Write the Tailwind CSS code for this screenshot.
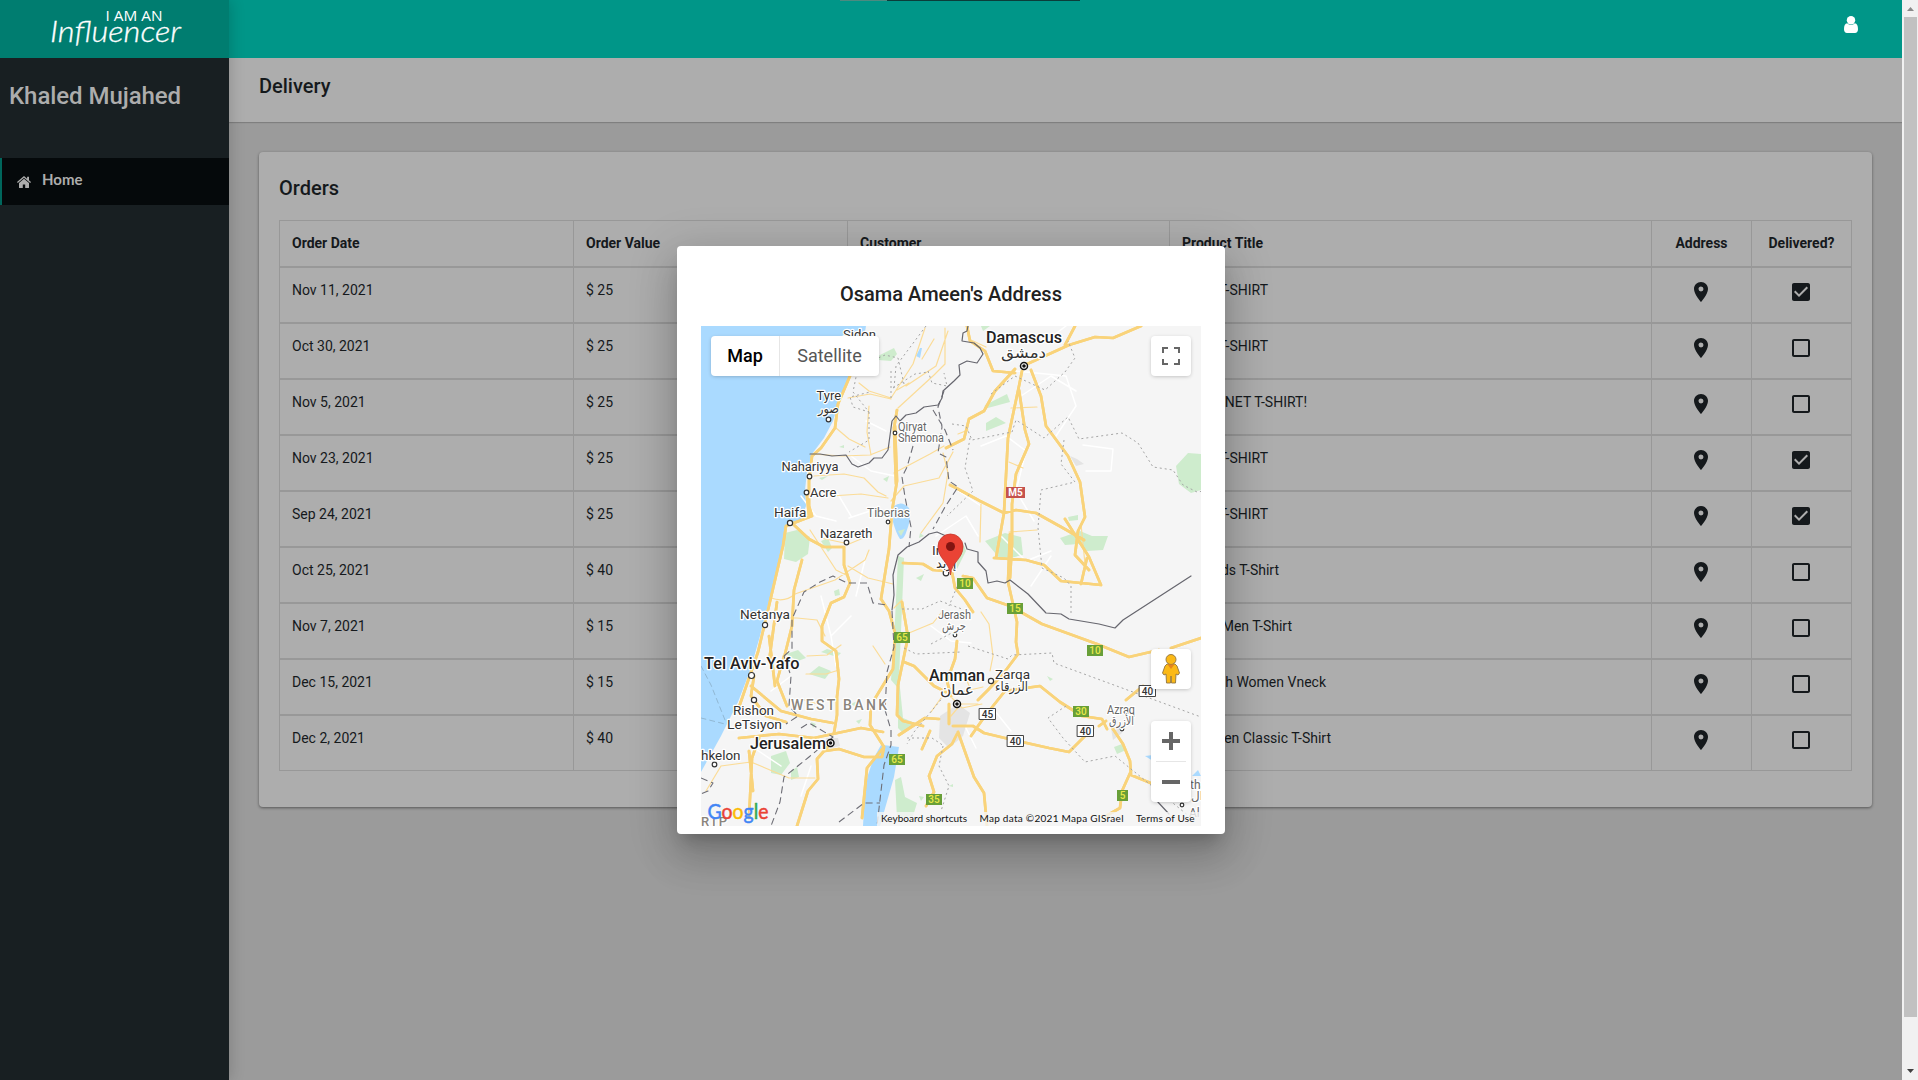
<!DOCTYPE html>
<html lang="en">
<head>
<meta charset="utf-8">
<title>Delivery</title>
<script src="https://cdn.jsdelivr.net/npm/@tailwindcss/browser@4"></script>
</head>
<body class="relative flex h-[1080px] w-[1918px] overflow-hidden bg-[#9b9b9b] font-[Roboto,sans-serif] text-[#15191c]">

<svg class="hidden">
  <symbol id="pin" viewBox="0 0 24 24"><path d="M12 2C8.13 2 5 5.13 5 9c0 5.25 7 13 7 13s7-7.75 7-13c0-3.87-3.13-7-7-7zm0 9.5a2.5 2.5 0 0 1 0-5 2.5 2.5 0 0 1 0 5z"/></symbol>
  <symbol id="on" viewBox="0 0 24 24"><path d="M19 3H5c-1.11 0-2 .9-2 2v14c0 1.1.89 2 2 2h14c1.11 0 2-.9 2-2V5c0-1.1-.89-2-2-2zm-9 14l-5-5 1.41-1.41L10 14.17l7.59-7.59L19 8l-9 9z"/></symbol>
  <symbol id="off" viewBox="0 0 24 24"><path d="M19 5v14H5V5h14m0-2H5c-1.1 0-2 .9-2 2v14c0 1.1.9 2 2 2h14c1.1 0 2-.9 2-2V5c0-1.1-.9-2-2-2z"/></symbol>
</svg>

<!-- Sidebar -->
<aside class="z-10 flex w-[229px] flex-none flex-col bg-[#181f22] shadow-[1px_0_14px_rgba(0,0,0,.18)]">
  <div class="h-[58px] bg-[#007d70]">
    <svg class="block" width="229" height="58" fill="#fff">
      <text x="105.500" y="20.500" font-family="Open Sans" font-size="15" textLength="57" lengthAdjust="spacingAndGlyphs">I AM AN</text>
      <text x="50" y="42" font-family="Lato" font-style="italic" font-weight="300" stroke="#fff" stroke-width=".3" font-size="29" textLength="131" lengthAdjust="spacingAndGlyphs">Influencer</text>
    </svg>
  </div>
  <div class="flex h-[100px] items-start pl-[9px] pt-[22px] text-[24px] font-medium leading-8 tracking-[-0.06px] text-[#adadad]">Khaled Mujahed</div>
  <a class="flex h-[47px] items-center border-l-2 border-[#00665c] bg-[#05090b] pl-[15px] font-[Lato,sans-serif] text-[15px] font-bold text-[#adadad]">
    <svg width="14" height="12" viewBox="0 0 14 12" fill="currentColor"><path d="M7 0 0 6l.8.9L7 1.700l6.200 5.200.8-.9-2-1.700V.8h-1.900v1.900z"/><path d="M7 2.800 2 7v4.400c0 .3.200.6.600.6h3.200V8.500h2.400V12h3.200c.4 0 .6-.3.6-.6V7z"/></svg>
    <span class="-mt-[5px] ml-[11px]">Home</span>
  </a>
</aside>

<div class="flex flex-1 flex-col">
  <!-- Top bar -->
  <header class="flex h-[58px] flex-none justify-end bg-[#009688] pr-[44px] pt-4">
    <svg width="14" height="17" viewBox="0 0 14 17" fill="#fff"><circle cx="7" cy="4.200" r="4.200"/><path d="M3.200 7.200C1 7.500 0 9.600 0 13.200 0 15.600 1.200 17 3 17h8c1.800 0 3-1.400 3-3.800 0-3.600-1-5.700-3.200-6A5 5 0 0 1 7 8.900a5 5 0 0 1-3.800-1.700z"/></svg>
  </header>
  <div class="flex h-16 flex-none bg-[#adadad] pl-[30px] pt-4 text-xl font-medium leading-6 shadow-[0_1px_1px_rgba(0,0,0,.18)]"><h1>Delivery</h1></div>
  <main class="flex-1 pl-[30px] pr-[30px] pt-[30px]">
    <section class="flex h-[655px] flex-col rounded bg-[#adadad] px-5 pt-6 shadow-[0_1px_3px_rgba(0,0,0,.45)]">
      <h2 class="text-xl font-medium leading-6">Orders</h2>
      <div class="mt-5 w-[1573px] border-r border-t border-[#989898] text-sm leading-5" id="orders">
        <div class="grid h-[47px] grid-cols-[294px_274px_322px_482px_100px_100px] border-b-2 border-[#989898] font-bold">
          <div class="border-l border-[#989898] pl-3 pt-3">Order Date</div>
          <div class="border-l border-[#989898] pl-3 pt-3">Order Value</div>
          <div class="border-l border-[#989898] pl-3 pt-3">Customer</div>
          <div class="border-l border-[#989898] pl-3 pt-3">Product Title</div>
          <div class="border-l border-[#989898] pt-3 text-center">Address</div>
          <div class="border-l border-[#989898] pt-3 text-center">Delivered?</div>
        </div>
      </div>
    </section>
  </main>
</div>

<!-- Scrollbar -->
<div class="flex w-4 flex-none flex-col items-center bg-[#f1f1f1]">
  <div class="flex h-[17px] items-center justify-center pt-px"><svg width="7" height="4" viewBox="0 0 7 4" fill="#8a8a8a"><path d="M0 4 3.500 0 7 4z"/></svg></div>
  <div class="ml-px h-[1000px] w-[13px] bg-[#c1c1c1]"></div>
  <div class="flex flex-1 items-end pb-[7px]"><svg width="7" height="4" viewBox="0 0 7 4" fill="#404040"><path d="M0 0 3.500 4 7 0z"/></svg></div>
</div>

<!-- Window edge above the page -->
<div class="absolute left-[840px] top-0 z-20 flex h-px w-[240px]"><div class="w-[47px] bg-[#4d8a80]"></div><div class="flex-1 bg-[#0b3d3a]"></div></div>

<!-- Address dialog -->
<div class="absolute left-[677px] top-[246px] z-30 flex h-[588px] w-[548px] flex-col rounded bg-white px-6 pt-9 shadow-[0_11px_15px_-7px_rgba(0,0,0,.2),0_24px_38px_3px_rgba(0,0,0,.14),0_9px_46px_8px_rgba(0,0,0,.12)]">
  <h3 class="h-11 text-center text-xl font-medium leading-6 text-[#212121]">Osama Ameen's Address</h3>
  <div class="relative h-[500px] w-[500px] overflow-hidden bg-[#f5f5f5]">
    <svg class="block" width="500" height="500" viewBox="0 0 500 500" fill="none" stroke-linejoin="round" stroke-linecap="round">
      <!-- Sea and coast -->
      <path fill="#aadaff" d="M0 0H165L160 30 149 50 139 72 132 95 123 112 111 128 106 146 104 164 105 180 99 196 86 198 83 213 78 240 68 275 59 310 49 345 37 376 20 410 0 446z"/>
      <path fill="#aadaff" d="M193 180q8-6 15 2 3 9-2 22-3 10-7 9-4-6-7-17z M182 419l16 2-5 30-14 49h-17l2-37q4-25 16-44z M215 30l4-8 2 0-2 10z M444 430l8-1 0 6z M491 450l6-6 3 6z"/>
      <!-- Woodland -->
      <g fill="#ceeccd">
        <path d="M84 207l12-3 13 7-2 17-12 8-12-3z M475 140l12-13 13 1v36l-10 3-12-9z M177 30l16-8 3 6-6 7-13-1z M141 43l14-2-8 6z M284 79l22-11 3 8-26 7z M285 97l10-6 10 6-20 8z M280 0l9 0-7 5z M284 215l20-8 16 4 2 18-22 5z M359 212l20-7 12 5 16 0-5 14-16 1-8-7-14 1z M367 191l10-2v5l-9 1z M197 230l6 2-2 50-3 70 4 40 12 5-12 10-5-5v-40l-7-8 4-60z M70 430l15-5 4 12-9 12-10-2z M90 445l6-4 2 10-8 3z M194 454l6-3 4 20 12 6-4 13-16 2z M108 348l10-8 12 5-6 8z M85 328l12-4 8 8-8 3z M120 326l6-3 14 4-4 4z M120 215l7-3 4 10-4 4z M133 265l5-2 1 6-5 1z M215 252l8-4-3 7z M252 225l10-8 3 8-9 18z M413 421l8-3 4 6-9 4z M150 378l6-3-1 6z M182 153l6-3-2 6z M118 152l9-2-6 4z"/>
        <path d="M138 121l5-2v3z M346 350l6 3-3 2z M248 460l4-2v3z M110 396l5 2-3 4z M155 395l6-2-3 5z M218 470l5 1-3 4z M197 205l7-2-4 7z M219 207l4 3-5 2z"/>
      </g>
      <g fill="#e4e4e4"><path d="M239 390l18-12 12 9-7 23-14 12-10-10z M369 130l7 3 7 5-8 2z M410 402l9-3 2 8-9 7z M125 412l12 0 2 8-12 3z"/></g>
      <!-- Local streets -->
      <g stroke="#fff" stroke-width="1.500">
        <path d="M150 130l20 15 24 5M165 95l20 10M280 120l25-10 20 15-10 40 18 30M320 70l30-20 25 15M375 80l-20 30M385 145h25l2-22-30-4M250 160l30 20M150 290l-20 20 5 30M165 230l-10 40M120 270l10 40M300 210l25 25 25-10M330 260l20-30M345 15l20-15M315 45l50 5 10 30M235 210l30-20 12 20M230 300l20 15 20 2M90 350l-20 15M100 170l15 20 20 5M135 165l15 25M148 192l30-10M50 420l30 20M110 440l-10 30M265 402l10 20M290 380l20 25"/>
      </g>
      <!-- Secondary roads -->
      <g stroke="#fbdc97" stroke-width="1.200">
        <path d="M147 72l22-4 21 5M135 102l13 11 16 8M168 80l-2 26 4 23M190 72l-22-7-10-8M190 72l22-34 12-36M205 60l30-20 12-35M197 82l36-33 11-11v-36M208 57l-12 7M233 13l-12 20M111 128l30 2 28-1 20-8M113 150l30-2 20 4 14 14 8 4M130 170l30-2 27 4M120 212l28 6 12-5M109 204l26 40 12 6M68 292l28 0 20 2 8 16M106 330l20-1 14-10M105 348l20 0 13-4M70 272q14 5 24-4l40-14 30-20 4-10M147 240l20 12 25 6M172 320l12 18M193 282l8-8M193 147l36-19 14-8M190 175l13-15 35-8 14-26M242 127l5 20-5 30-22 30"/>
        <path d="M208 307l24-10 8-10M280 178l-1 38M308 136l14 6M20 440l30-4 38 16 26 0M20 440l-15 25M230 386l10-14 20-6 22-5M250 390l10-12 17 0M251 372l10 10 20-4M289 345l3-15-4-32-8-12M262 346l8 18M257 108l10-4M310 82l26-1M100 373l20 6M270 14l15 7M308 206l28-2M380 198l4 40"/>
      </g>
      <g stroke="#f9d37a" stroke-width="2.700" id="main">
        <path d="M149 50l-12 28-3 24-14 20-9 8-3 25v25l3 10-26 10-3 20-15 64-10 42-20 58"/>
        <path d="M108 190l-2-20M93 199l15 14 15 8h20l0 18 6 18-6 14-13 6-9 23 0 15 14 10 3 28-2 18 0 18-3 18M101 234l-8 30-2 36-7 28M76 276l-8 60M68 310l6 50M83 330l-7 25 10 25M50 360l30 25 30 8 22 4M38 412l40-4 35 4 47-10 22 4M53 350l-3 20 15 20 20 6M58 412l-7 20-3 60M48 425l4 40"/>
        <path d="M194 100l2 55-5 30-3 38-8 50M196 84l-3 18 2 56M180 273l8 12 6 22-2 36-22 36-1 20 14 22-2 10-18 0-25-8-14 2M130 417l-14 16 1 20-10 12-11 35M182 422l-16 20-5 50"/>
        <path d="M202 237l20 1 10 6 12 1M201 276l6 35-10 48-1 30 6 6 20 5M203 336l10 4 20 20 12 6M198 409l26-17 14 1M251 246l3 16 10 12 8 12M262 250l10 2 14 20 23 8 32 18 55 20 32 13 30-7M470 322l30-10M309 208l-2 48 9 40-1 20 2 12-15 20-15 16-10 10M256 315l-2 18-8 22 4 15"/>
        <path d="M248 378v20M256 408l-5 10-15 12-8 20 5 16-8 14M257 406l16 45 10 16 3 33M252 400l20 0 11 7 25 6 40 9 20 4 14-14 10-10M270 410l14-20 20-25 35-5 20 16 22 14 20 3 5 10M425 374l17-14M398 400l7-5M410 400l12 18 7 17 1 14 22 9M430 445l-9 20-2 17-14 8M229 405l-8 18"/>
        <path d="M321 45l-3 15-11 52-4 75-8 45M318 64l6 40 4 14-13 30-4 30 0 40-2 34M330 44l10 26 5 30 22 30 12 26 5 35-7 14-3 24 14 15M266 0l3 15 15 10 8 20 22 2M314 43l-20 22-11 20-15 8-5 20-18 9M249 159l8 4 22 12 24 12 12-3 20 3 27 15 21 12M293 232l32 2 18 5 17 16 40 4-12-28-24-38M386 232l-6 26M324 39l44-20 26-8 18 1 28-12M364 19l10-19"/>
      </g>
      <g><use href="#main" class="[stroke-width:1px]"/></g>
      <!-- Administrative boundaries -->
      <g stroke="#a5a5a5" stroke-width="1" stroke-dasharray="2 3" stroke-linecap="butt">
        <path d="M225 0l-30 40-2 22M203 58l-6-26-13-3-27 12-5 25 16 20-16-5-3-10 20-5M190 45v30M227 45l4 12 15 3-3-13M168 86v28l-20 12M192 62l22-14 13-2M290 68l24-18 30 14 20-18 10-14-7-17M251 98l14 2 6 14 40-8 4-12 28 18 24-21 11 22 43-6 16 10 15 24 20 3 10 15 14 7 14-2M363 114l-3 24 14 18-34 8-3 38 4 40 22 10 7 8 0 30M269 112l-5 30 8 23-26 25M201 283l20 0 18-8 22 8M203 322l12 6 45-2M230 318l30-16M267 320l40 13 4-4 40-2 2 10 147 54M365 380l-18 12 15 20 22 24 30-6 80 65M258 256l-10 24M243 370l-30 36-7 12M206 412l25 0 12 8M242 420l-4 20 10 20-8 25"/>
      </g>
      <g stroke="#91b8d4" stroke-dasharray="5 4"><path d="M0 340l10 19 14 35M0 392l24 6"/></g>
      <g stroke="#6e6e76" stroke-width="1.100" stroke-dasharray="7 4" stroke-linecap="butt">
        <path d="M83 330l8-7v-30l12-27 16-10 13-6 14 7 20 0 6 20 14 2M83 330l7 20-2 30 9 10-12 8M100 402l8-5 24 14-24 20-25 20-4 25-9 24M191 285l2 36-7 25-2 38 6 20v15l-7 20-7 61M138 496l25-19 16 0M212 120l-6 21-5 10 3 20 6 30-2 20M243 65l-6 16 4 20-4 26 8 4 3 24 9 6-13 20-12 22M232 84l12 20 8 20M0 452l12 5-5 8-7 3"/>
      </g>
      <!-- International borders -->
      <g stroke="#66666e" stroke-width="1.200">
        <path d="M267 0l-1 5-4 2-1 8 12 2 6 5 3 6-6 9-10-2-8 4 1 10-6 6-11 10-1 7-4 7-14 2-8 6-10 2-6 6-4-5-4 5-4 29-6 8-8 0-5 5-11 4-6-3-6-9-14 1-12-2h-10"/>
        <path d="M191 284l2-15-1-20 5-20 9-8 12-5 10-8 8-2 9 4M264 217l2 6 11 3v10l8 9 2 12 9-2 8 2 5-3 18 14 18 19 15 1 8 5 30 5 16 4 8-8 68-44"/>
        <path d="M456 475l12 13"/>
      </g>
      <!-- Road shields -->
      <g fill="#689f38" font-family="Roboto" font-size="10" font-weight="500" text-anchor="middle">
        <path d="M256 252h16v11h-16z M306 277h16v11h-16z M386 319h16v11h-16z M372 380h16v11h-16z M416 464h11v11h-11z M193 306h16v11h-16z M188 428h16v11h-16z M225 468h16v11h-16z"/>
        <path fill="#c5524d" d="M305 161h19v11h-19z"/>
        <g fill="#e9e94a"><text x="264" y="261">10</text><text x="314" y="286">15</text><text x="394" y="328">10</text><text x="380" y="389">30</text><text x="421.500" y="473">5</text><text x="201" y="315">65</text><text x="196" y="437">65</text><text x="233" y="477">35</text></g>
        <text x="314.500" y="170" fill="#fff" font-weight="700">M5</text>
        <g fill="#fff" stroke="#444"><path d="M278.500 382.500h16v11h-16z M306.500 409.500h16v11h-16z M376.500 399.500h16v11h-16z M438.500 359.500h16v11h-16z"/></g>
        <g fill="#333"><text x="286.500" y="391.500">45</text><text x="314.500" y="418.500">40</text><text x="384.500" y="408.500">40</text><text x="446.500" y="368.500">40</text></g>
      </g>
      <!-- Town dots -->
      <g fill="#fff" stroke="#333" stroke-width="1.200">
        <circle cx="127.500" cy="93.500" r="2.300"/><circle cx="194" cy="107" r="1.800"/><circle cx="108.500" cy="150.500" r="2.300"/><circle cx="105.500" cy="166.500" r="2.300"/><circle cx="89" cy="197" r="2.600"/><circle cx="187" cy="196" r="1.800"/><circle cx="145.500" cy="216.500" r="2.300"/><circle cx="64" cy="299" r="2.600"/><circle cx="50.500" cy="349.500" r="3"/><circle cx="53" cy="374" r="2.600"/><circle cx="13.500" cy="438.500" r="2.300"/><circle cx="245" cy="247" r="2.800"/><circle cx="254" cy="309" r="1.800"/><circle cx="290" cy="355" r="2.600"/><circle cx="421" cy="403" r="1.800"/><circle cx="481" cy="479" r="1.800"/>
        <g stroke="#111" stroke-width="1.500"><circle cx="323" cy="40" r="3.500"/><circle cx="129.500" cy="417" r="3.500"/><circle cx="256" cy="378" r="3.500"/></g>
        <g fill="#111" stroke="none"><circle cx="323" cy="40" r="1.800"/><circle cx="129.500" cy="417" r="1.800"/><circle cx="256" cy="378" r="1.800"/></g>
      </g>
      <!-- Place names -->
      <g font-family="Roboto, DejaVu Sans, sans-serif" fill="#333" stroke="#fff" stroke-width="2.500" paint-order="stroke" font-size="13.500">
        <text x="142" y="12.500" textLength="33" lengthAdjust="spacingAndGlyphs">Sidon</text>
        <text x="115.500" y="74" textLength="24.500" lengthAdjust="spacingAndGlyphs">Tyre</text>
        <text x="117" y="87" font-size="13" textLength="21" lengthAdjust="spacingAndGlyphs">صور</text>
        <text x="80.500" y="144.500" textLength="57" lengthAdjust="spacingAndGlyphs">Nahariyya</text>
        <text x="109" y="170.500" textLength="26.500" lengthAdjust="spacingAndGlyphs">Acre</text>
        <text x="73" y="190.500" textLength="32.500" lengthAdjust="spacingAndGlyphs">Haifa</text>
        <text x="119" y="211.500" textLength="52.500" lengthAdjust="spacingAndGlyphs">Nazareth</text>
        <text x="39" y="292.500" textLength="50" lengthAdjust="spacingAndGlyphs">Netanya</text>
        <text x="32" y="388.500" textLength="41" lengthAdjust="spacingAndGlyphs">Rishon</text>
        <text x="26" y="402.500" textLength="55" lengthAdjust="spacingAndGlyphs">LeTsiyon</text>
        <text x="0" y="433.500" textLength="39.500" lengthAdjust="spacingAndGlyphs">hkelon</text>
        <text x="231" y="229">Irbid</text>
        <text x="235" y="242" font-size="13">إربد</text>
        <text x="294" y="352.500" textLength="35" lengthAdjust="spacingAndGlyphs">Zarqa</text>
        <text x="294" y="365" font-size="13" textLength="33" lengthAdjust="spacingAndGlyphs">الزرقاء</text>
        <g font-size="15.800" font-weight="500" fill="#222">
          <text x="285" y="16.500" textLength="76" lengthAdjust="spacingAndGlyphs">Damascus</text>
          <text x="3" y="342.500" textLength="95.500" lengthAdjust="spacingAndGlyphs">Tel Aviv-Yafo</text>
          <text x="49" y="422.500" textLength="76" lengthAdjust="spacingAndGlyphs">Jerusalem</text>
          <text x="228" y="354.500" textLength="56" lengthAdjust="spacingAndGlyphs">Amman</text>
        </g>
        <text x="300" y="32" font-size="15" textLength="45" lengthAdjust="spacingAndGlyphs">دمشق</text>
        <text x="239" y="369" font-size="15" textLength="34" lengthAdjust="spacingAndGlyphs">عمان</text>
        <g font-size="12" fill="#666">
          <text x="197" y="105" textLength="28.500" lengthAdjust="spacingAndGlyphs">Qiryat</text><text x="197" y="116" textLength="46" lengthAdjust="spacingAndGlyphs">Shemona</text>
          <text x="166" y="191" textLength="43" lengthAdjust="spacingAndGlyphs">Tiberias</text>
          <text x="237" y="293" textLength="33" lengthAdjust="spacingAndGlyphs">Jerash</text><text x="241" y="304" textLength="24" lengthAdjust="spacingAndGlyphs">جرش</text>
          <text x="406" y="388" textLength="28" lengthAdjust="spacingAndGlyphs">Azraq</text><text x="408" y="399" textLength="25" lengthAdjust="spacingAndGlyphs">الأزرق</text>
          <text x="489" y="463">tha</text><text x="490" y="474">ال</text><text x="488" y="491">Al</text>
        </g>
        <g fill="#8a847c" font-weight="500" font-size="14"><text x="90" y="383.500" textLength="96">WEST BANK</text><text x="0" y="500" textLength="26" font-size="13">RIP</text></g>
      </g>
      <!-- Marker -->
      <path d="M249.500 248.500C248.500 236 237 233 237 220.500a12.500 12.500 0 0 1 25 0C262 233 250.500 236 249.500 248.500z" fill="#ea4335" stroke="#c5362b" stroke-width=".8"/>
      <circle cx="249.500" cy="220.500" r="4.500" fill="#811411"/>
      <!-- Attribution -->
      <path fill="#f5f5f5" fill-opacity=".8" d="M176 486h324v14H176z"/>
      <g font-family="Lato, sans-serif" font-size="10" fill="#111">
        <text x="180" y="496" textLength="86">Keyboard shortcuts</text>
        <text x="278.500" y="496" textLength="144">Map data ©2021 Mapa GISrael</text>
        <text x="435" y="496" textLength="58.500">Terms of Use</text>
      </g>
      <text x="6.500" y="492.500" font-family="Lato" font-weight="400" font-size="21.500" textLength="61" lengthAdjust="spacingAndGlyphs"><tspan fill="#4285f4" stroke="#4285f4" stroke-width=".5">G</tspan><tspan fill="#ea4335" stroke="#ea4335" stroke-width=".5">o</tspan><tspan fill="#fbbc04" stroke="#fbbc04" stroke-width=".5">o</tspan><tspan fill="#4285f4" stroke="#4285f4" stroke-width=".5">g</tspan><tspan fill="#34a853" stroke="#34a853" stroke-width=".5">l</tspan><tspan fill="#ea4335" stroke="#ea4335" stroke-width=".5">e</tspan></text>
    </svg>

    <div class="absolute left-[10px] top-[10px] flex h-10 rounded-sm bg-white text-lg leading-10 shadow-[0_1px_4px_-1px_rgba(0,0,0,.3)]">
      <div class="w-[69px] border-r border-[#e6e6e6] text-center font-medium text-black">Map</div>
      <div class="w-[99px] text-center text-[#565656]">Satellite</div>
    </div>
    <div class="absolute left-[450px] top-[10px] flex size-10 items-center justify-center rounded-sm bg-white shadow-[0_1px_4px_-1px_rgba(0,0,0,.3)]">
      <svg width="18" height="18" viewBox="0 0 18 18" fill="#666"><path d="M0 0v6h2V2h4V0H0zm16 0h-4v2h4v4h2V0h-2zm0 16h-4v2h6v-6h-2v4zM2 12H0v6h6v-2H2v-4z"/></svg>
    </div>
    <div class="absolute left-[450px] top-[323px] flex size-10 items-center justify-center rounded-sm bg-white shadow-[0_1px_4px_-1px_rgba(0,0,0,.3)]">
      <svg class="-ml-px" width="18" height="30" viewBox="0 0 18 30" fill="#fbb917" stroke="#8f7442" stroke-width=".9"><path d="M5 10h8l2 2 2.500 7-1.500 2-2-1-.5 9h-4L9 22l-.5 7h-4L4 20l-2 1-1.500-2L3 12z"/><circle cx="9" cy="5.500" r="5"/><path d="M5.500 10.500h7L9 15z" fill="#e5841e" stroke="none"/></svg>
    </div>
    <div class="absolute left-[450px] top-[395px] flex h-[81px] w-10 flex-col items-center rounded-sm bg-white shadow-[0_1px_4px_-1px_rgba(0,0,0,.3)]">
      <div class="flex h-10 items-center"><svg width="18" height="18" fill="#666"><path d="M7 0h4v7h7v4h-7v7H7v-7H0V7h7z"/></svg></div>
      <div class="h-px w-[30px] bg-[#e6e6e6]"></div>
      <div class="flex h-10 items-center"><svg width="18" height="4" fill="#666"><path d="M0 0h18v4H0z"/></svg></div>
    </div>
  </div>
</div>

<script>
const rows = [
  ["Nov 11, 2021", "$ 25", "T-SHIRT", 86, 1],
  ["Oct 30, 2021", "$ 25", "T-SHIRT", 86, 0],
  ["Nov 5, 2021", "$ 25", "NET T-SHIRT!", 125, 0],
  ["Nov 23, 2021", "$ 25", "T-SHIRT", 86, 1],
  ["Sep 24, 2021", "$ 25", "T-SHIRT", 86, 1],
  ["Oct 25, 2021", "$ 40", "Kids T-Shirt", 97, 0],
  ["Nov 7, 2021", "$ 15", "Men T-Shirt", 110, 0],
  ["Dec 15, 2021", "$ 15", "h Women Vneck", 144, 0],
  ["Dec 2, 2021", "$ 40", "en Classic T-Shirt", 149, 0]
];
document.getElementById("orders").insertAdjacentHTML("beforeend", rows.map(([date, value, title, width, done]) => `
  <div class="grid h-14 grid-cols-[294px_274px_322px_482px_100px_100px] border-b-2 border-[#989898] last:h-[55px] last:border-b">
    <div class="border-l border-[#989898] pl-3 pt-3">${date}</div>
    <div class="border-l border-[#989898] pl-3 pt-3">${value}</div>
    <div class="border-l border-[#989898]"></div>
    <div class="border-l border-[#989898] pl-3 pt-3"><span class="block whitespace-nowrap text-right" style="width:${width}px">${title}</span></div>
    <div class="flex justify-center border-l border-[#989898] pr-px pt-3"><svg class="size-6 fill-current"><use href="#pin"/></svg></div>
    <div class="flex justify-center border-l border-[#989898] pr-px pt-3"><svg class="size-6 fill-current"><use href="#${done ? "on" : "off"}"/></svg></div>
  </div>`).join(""));
</script>
</body>
</html>
